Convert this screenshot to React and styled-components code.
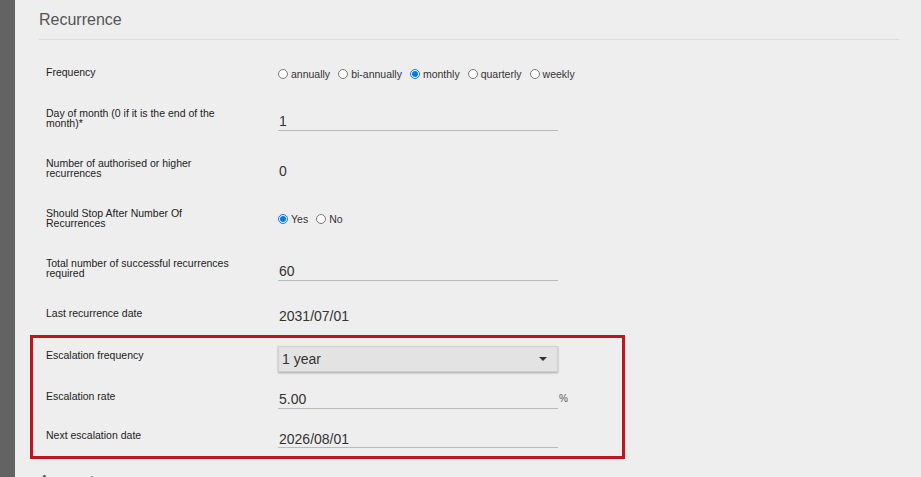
import styled, { createGlobalStyle } from "styled-components";

const GlobalStyle = createGlobalStyle`
	html, body {
		margin: 0;
		padding: 0;
		background: #eeeeee;
		font-family: "Liberation Sans", Arial, sans-serif;
		overflow: hidden;
	}
	* {
		box-sizing: border-box;
	}
`;

const Layout = styled.div`
	display: flex;
	min-height: 100vh;
`;
const SideStrip = styled.div`
	width: 15px;
	flex-shrink: 0;
	background-color: #636363;
`;
const Content = styled.div`
	flex: 1;
	padding: 0 22px 0 24px;
`;
const SectionTitle = styled.h2`
	margin: ${(p) => p.$top || 11}px 0 0;
	padding-bottom: 10px;
	font-size: 16px;
	font-weight: 400;
	line-height: 18px;
	color: #555;
	border-bottom: ${(p) => (p.$plain ? "none" : "1px solid #dddddd")};
`;
const Form = styled.div`
	margin-top: 12px;
	display: flex;
	flex-direction: column;
`;
const Row = styled.div`
	display: flex;
	align-items: center;
	height: ${(p) => p.$h || 50}px;
	padding-left: ${(p) => (p.$inset ? 13 : 7)}px;
`;
const Label = styled.div`
	width: 232px;
	flex-shrink: 0;
	padding-right: 42px;
	font-size: 10.5px;
	line-height: 10px;
	color: #222;
	margin-top: ${(p) => p.$nudge || -1}px;
`;
const TextInput = styled.input`
	width: 280px;
	height: 25px;
	padding: 7px 1px 0;
	border: none;
	border-bottom: 1px solid #bbbbbb;
	background: transparent;
	font-family: inherit;
	font-size: 14px;
	line-height: 16px;
	color: #333;
	outline: none;
`;
const StaticValue = styled.div`
	height: 25px;
	padding: 7px 1px 0;
	font-size: 14px;
	line-height: 16px;
	color: #333;
`;
const RadioGroup = styled.div`
	display: flex;
	align-items: center;
	margin-top: 2px;
`;
const RadioOption = styled.label`
	display: flex;
	align-items: center;
	margin-right: 8px;
	font-size: 10.5px;
	color: #333;

	input {
		width: 10px;
		height: 10px;
		margin: 0 3px 0 0;
	}
`;
const Highlight = styled.div`
	width: 595px;
	height: 124px;
	margin: 2px 0 0 -9px;
	border: 3px solid #c0151d;
`;
const SelectBox = styled.div`
	position: relative;
	width: 280px;
	height: 26px;
	margin-top: 3px;
	padding: 4px 3px;
	background: #e3e3e3;
	border: 1px solid #d0d0d0;
	box-shadow: 0 1px 2px rgba(0, 0, 0, 0.3);
	font-size: 14px;
	line-height: 16px;
	color: #333;
`;
const Caret = styled.span`
	position: absolute;
	right: 10px;
	top: 10px;
	width: 0;
	height: 0;
	border-left: 4.5px solid transparent;
	border-right: 4.5px solid transparent;
	border-top: 4.5px solid #333;
`;
const Unit = styled.span`
	margin: 4px 0 0 1px;
	font-size: 10px;
	color: #555;
`;

const frequencies = ["annually", "bi-annually", "monthly", "quarterly", "weekly"];

function Radios({ name, options, value }) {
	return (
		<RadioGroup>
			{options.map((o) => (
				<RadioOption key={o}>
					<input type="radio" name={name} defaultChecked={o === value} />
					{o}
				</RadioOption>
			))}
		</RadioGroup>
	);
}

function App() {
	return (
		<>
			<GlobalStyle />
			<Layout>
				<SideStrip />
				<Content>
					<SectionTitle>Recurrence</SectionTitle>
					<Form>
						<Row $h={41}>
							<Label>Frequency</Label>
							<Radios name="frequency" options={frequencies} value="monthly" />
						</Row>
						<Row>
							<Label>Day of month (0 if it is the end of the month)*</Label>
							<TextInput defaultValue="1" />
						</Row>
						<Row>
							<Label>Number of authorised or higher recurrences</Label>
							<StaticValue>0</StaticValue>
						</Row>
						<Row>
							<Label>Should Stop After Number Of Recurrences</Label>
							<Radios name="stop" options={["Yes", "No"]} value="Yes" />
						</Row>
						<Row>
							<Label>Total number of successful recurrences required</Label>
							<TextInput defaultValue="60" />
						</Row>
						<Row $h={40}>
							<Label>Last recurrence date</Label>
							<StaticValue>2031/07/01</StaticValue>
						</Row>

						<Highlight>
							<Row $h={38} $inset>
								<Label $nudge={-4}>Escalation frequency</Label>
								<SelectBox>
									1 year
									<Caret />
								</SelectBox>
							</Row>
							<Row $h={40} $inset>
								<Label>Escalation rate</Label>
								<TextInput defaultValue="5.00" />
								<Unit>%</Unit>
							</Row>
							<Row $h={39} $inset>
								<Label>Next escalation date</Label>
								<TextInput defaultValue="2026/08/01" />
							</Row>
						</Highlight>
					</Form>
					<SectionTitle $plain $top={14}>
						Amount
					</SectionTitle>
				</Content>
			</Layout>
		</>
	);
}

export default App;
